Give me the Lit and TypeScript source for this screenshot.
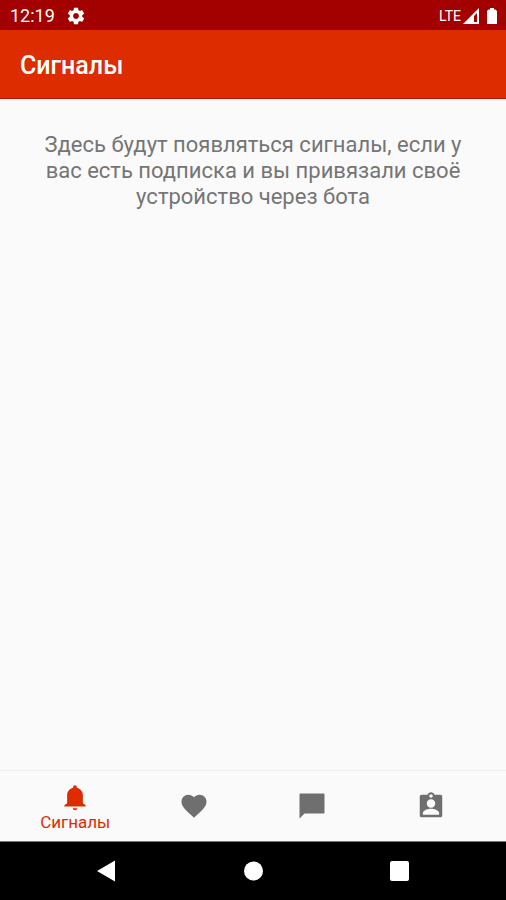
import { LitElement, html, css, svg, nothing } from "lit";
import { customElement, state } from "lit/decorators.js";

interface Tab {
  id: string;
  label: string;
  path: string;
}

const TABS: Tab[] = [
  {
    id: "signals",
    label: "Сигналы",
    path: "M12 22.500c1 0 1.800-.6 1.800-1.500h-3.600c0 .9.8 1.500 1.800 1.500zM18.300 17v-6.500c0-2.900-1.900-5.200-4.800-5.900V4c0-.83-.67-1.500-1.500-1.500s-1.500.67-1.500 1.500v.6c-2.900.7-4.800 3-4.800 5.900V17l-2.200 1.600v1h17v-1z",
  },
  {
    id: "favorites",
    label: "Избранное",
    path: "M12 21.350l-1.450-1.320C5.400 15.360 2 12.280 2 8.500 2 5.420 4.420 3 7.500 3c1.740 0 3.410.81 4.500 2.090C13.090 3.810 14.760 3 16.500 3 19.580 3 22 5.420 22 8.500c0 3.780-3.400 6.860-8.550 11.540L12 21.350z",
  },
  {
    id: "chat",
    label: "Чат",
    path: "M21 2H3c-.6 0-1 .4-1 1v19l4-4h15c.6 0 1-.4 1-1V3c0-.6-.4-1-1-1z",
  },
  {
    id: "profile",
    label: "Профиль",
    path: "M19.500 3h-4.600C14.400 1.840 13.300 1 12 1S9.600 1.840 9.100 3H4.500C3.600 3 3 3.600 3 4.500v15c0 .9.6 1.500 1.500 1.500h15c.9 0 1.500-.6 1.500-1.500v-15c0-.9-.6-1.500-1.500-1.500zM12 2.500c.8 0 1.400.6 1.400 1.400s-.6 1.400-1.400 1.400-1.400-.6-1.400-1.400.6-1.400 1.400-1.400zM12 6.500c1.900 0 3.400 1.500 3.400 3.400s-1.500 3.400-3.400 3.400-3.400-1.500-3.400-3.400 1.500-3.400 3.400-3.400zm6.500 12.500h-13v-1.400c0-2.200 4.300-3.400 6.500-3.400s6.500 1.200 6.500 3.400V19z",
  },
];

const SYSTEM_KEYS = [
  { label: "Назад", shape: svg`<path d="M21 1.500v21L3 12z" />` },
  { label: "Домой", shape: svg`<circle cx="12.500" cy="12" r="9.500" />` },
  { label: "Недавние", shape: svg`<rect x="2" y="2" width="19" height="20" rx="2" />` },
];

@customElement("app-root")
export class AppRoot extends LitElement {
  static styles = css`
    :host {
      display: flex;
      flex-direction: column;
      min-height: 100vh;
      background: #fafafa;
      font-family: Roboto, "Noto Sans", sans-serif;
    }
    svg {
      display: block;
      fill: currentColor;
    }
    button {
      border: 0;
      padding: 0;
      background: none;
      font: inherit;
      color: inherit;
      cursor: pointer;
    }
    .status {
      box-sizing: border-box;
      display: flex;
      align-items: center;
      height: 30px;
      padding: 2px 8px 0 10px;
      background: #a30000;
      color: #fff;
    }
    .time {
      font-size: 18px;
      line-height: 28px;
      margin-right: 11px;
    }
    .spacer {
      flex: 1;
    }
    .network {
      font-size: 14px;
      margin-right: 2px;
    }
    .battery {
      margin-left: 7px;
    }
    .appbar {
      box-sizing: border-box;
      height: 69px;
      padding: 4px 20px 0;
      display: flex;
      align-items: center;
      background: #dd2c00;
      border-bottom: 1px solid #c4100a;
      color: #fff;
    }
    .title {
      margin: 0;
      font-size: 25px;
      line-height: 32px;
      font-weight: 500;
    }
    .content {
      flex: 1;
      padding: 33px 40px;
      color: #757575;
    }
    .empty {
      margin: 0;
      font-size: 22px;
      line-height: 26px;
      text-align: center;
    }
    .tabs {
      display: flex;
      height: 70px;
      padding: 0 16px;
      border-top: 1px solid #eee;
      color: #6f6f6f;
    }
    .tab {
      flex: 1;
      display: flex;
      flex-direction: column;
      align-items: center;
      justify-content: center;
    }
    .tab.active {
      padding-top: 2px;
      color: #dd2c00;
    }
    .tab-label {
      font-size: 17px;
      line-height: 20px;
    }
    .system {
      display: flex;
      align-items: center;
      height: 58px;
      padding: 0 33px;
      background: #000;
      border-top: 1px solid #777;
      color: #fff;
    }
    .key {
      flex: 1;
      display: flex;
      justify-content: center;
    }
  `;

  @state() private active = "signals";

  render() {
    return html`
      <div class="status">
        <span class="time">12:19</span>
        <svg width="20" height="20" viewBox="0 0 24 24" aria-hidden="true">
          <path
            d="M19.430 12.980c.04-.32.07-.64.07-.98s-.03-.66-.07-.98l2.110-1.650c.19-.15.24-.42.12-.64l-2-3.460c-.12-.22-.39-.3-.61-.22l-2.490 1c-.52-.4-1.080-.73-1.690-.98l-.38-2.650C14.460 2.180 14.250 2 14 2h-4c-.25 0-.46.18-.49.42l-.38 2.650c-.61.25-1.170.59-1.690.98l-2.490-1c-.23-.09-.49 0-.61.22l-2 3.460c-.13.22-.07.49.12.64l2.110 1.650c-.04.32-.07.65-.07.98s.03.66.07.98l-2.110 1.650c-.19.15-.24.42-.12.64l2 3.460c.12.22.39.3.61.22l2.490-1c.52.4 1.080.73 1.690.98l.38 2.650c.03.24.24.42.49.42h4c.25 0 .46-.18.49-.42l.38-2.650c.61-.25 1.170-.59 1.690-.98l2.490 1c.23.09.49 0 .61-.22l2-3.460c.12-.22.07-.49-.12-.64l-2.110-1.650zM12 15.500c-1.930 0-3.500-1.570-3.500-3.500s1.570-3.500 3.500-3.500 3.500 1.570 3.500 3.500-1.570 3.500-3.500 3.500z"
          />
        </svg>
        <span class="spacer"></span>
        <span class="network">LTE</span>
        <svg width="16" height="16" viewBox="0 0 16 16" aria-hidden="true">
          <path d="M0 16L16 0v16zM11 8v6h3V5z" fill-rule="evenodd" />
        </svg>
        <svg class="battery" width="12" height="16" viewBox="0 0 12 16" aria-hidden="true">
          <path d="M4 0h4v1.500h1.500L11 3v13H1V3l1.500-1.500H4z" />
        </svg>
      </div>
      <header class="appbar"><h1 class="title">Сигналы</h1></header>
      <main class="content">
        <p class="empty">
          Здесь будут появляться сигналы, если у вас есть подписка и вы привязали
          своё устройство через бота
        </p>
      </main>
      <nav class="tabs">
        ${TABS.map(
          (tab) => html`<button
            class="tab ${tab.id === this.active ? "active" : ""}"
            aria-label=${tab.label}
            @click=${() => (this.active = tab.id)}
          >
            <svg width="30" height="30" viewBox="0 0 24 24" aria-hidden="true">
              <path d=${tab.path} fill-rule="evenodd" />
            </svg>
            ${tab.id === this.active
              ? html`<span class="tab-label">${tab.label}</span>`
              : nothing}
          </button>`
        )}
      </nav>
      <div class="system">
        ${SYSTEM_KEYS.map(
          (key) => html`<div class="key">
            <button aria-label=${key.label}>
              <svg width="24" height="24" viewBox="0 0 24 24" aria-hidden="true">
                ${key.shape}
              </svg>
            </button>
          </div>`
        )}
      </div>
    `;
  }
}
